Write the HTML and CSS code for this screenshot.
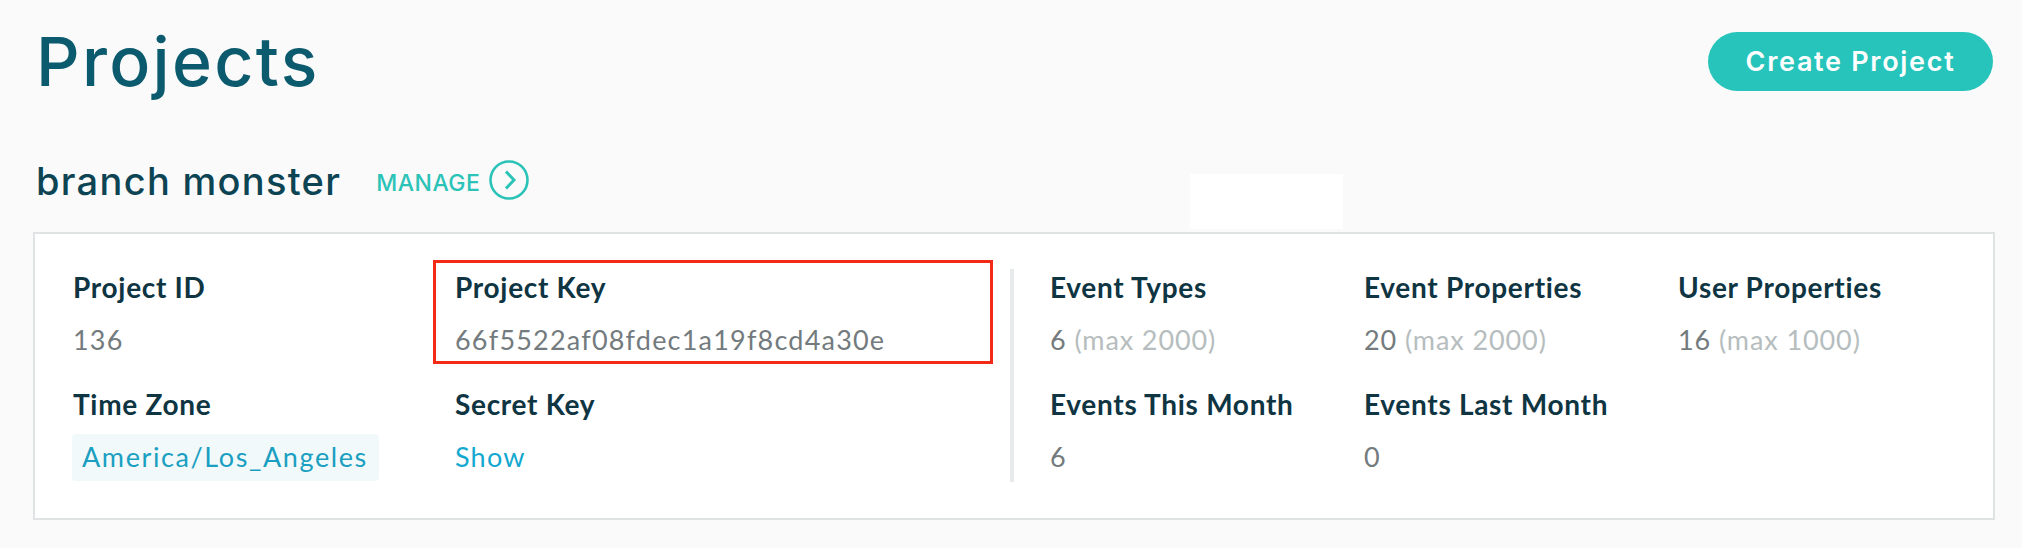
FILE: index.html
```html
<!DOCTYPE html>
<html lang="en">
<head>
<meta charset="utf-8">
<title>Projects</title>
<link rel="stylesheet" href="styles.css">
</head>
<body>
<div class="page">
  <header class="top">
    <h1 class="title">Projects</h1>
    <button class="create-btn" type="button">Create Project</button>
  </header>

  <section class="project">
    <div class="project-head">
      <h2 class="project-name">branch monster</h2>
      <a class="manage" href="#">
        <span class="manage-text">MANAGE</span>
        <svg class="manage-icon" width="40" height="40" viewBox="0 0 40 40" aria-hidden="true">
          <circle cx="20" cy="20" r="18.5" fill="none" stroke="#2bc3b8" stroke-width="2.6"/>
          <path d="M17 11.5 L25 20 L17 28.5" fill="none" stroke="#2bc3b8" stroke-width="3"/>
        </svg>
      </a>
      <div class="tab-ghost"></div>
    </div>

    <div class="card">
      <div class="card-left">
        <div class="field">
          <div class="label">Project ID</div>
          <div class="value">136</div>
        </div>
        <div class="field">
          <div class="label">Project Key</div>
          <div class="value">66f5522af08fdec1a19f8cd4a30e</div>
          <div class="highlight-box"></div>
        </div>
        <div class="field">
          <div class="label">Time Zone</div>
          <div class="value"><span class="tz">America/Los_Angeles</span></div>
        </div>
        <div class="field">
          <div class="label">Secret Key</div>
          <div class="value"><a class="link" href="#">Show</a></div>
        </div>
      </div>
      <div class="card-right">
        <div class="field">
          <div class="label">Event Types</div>
          <div class="value stat">6 <span class="muted">(max 2000)</span></div>
        </div>
        <div class="field">
          <div class="label">Event Properties</div>
          <div class="value stat">20 <span class="muted">(max 2000)</span></div>
        </div>
        <div class="field">
          <div class="label">User Properties</div>
          <div class="value stat">16 <span class="muted">(max 1000)</span></div>
        </div>
        <div class="field">
          <div class="label">Events This Month</div>
          <div class="value stat">6</div>
        </div>
        <div class="field">
          <div class="label">Events Last Month</div>
          <div class="value stat">0</div>
        </div>
      </div>
    </div>
  </section>
</div>
</body>
</html>
```

FILE: styles.css
```css
* { box-sizing: border-box; }

html, body {
  margin: 0;
  padding: 0;
  background: #fafafa;
}

body {
  font-family: "Lato", "Liberation Sans", sans-serif;
}

.page {
  padding: 27px 27px 0 33px;
}

.top {
  display: flex;
  align-items: center;
  justify-content: space-between;
}

.title {
  margin: 0 0 0 3px;
  font-family: "Inter", "Liberation Sans", sans-serif;
  font-weight: 500;
  font-size: 68px;
  line-height: 68px;
  letter-spacing: 2.3px;
  color: #0b5a6d;
}

.create-btn {
  margin-right: 2px;
  width: 285px;
  height: 59px;
  border: 0;
  border-radius: 30px;
  background: #27c4bb;
  color: #ffffff;
  font-family: "Inter", "Liberation Sans", sans-serif;
  font-weight: 600;
  font-size: 27px;
  letter-spacing: 1.7px;
  padding: 0;
}

.project {
  margin-top: 62px;
}

.project-head {
  position: relative;
  display: flex;
  align-items: center;
  height: 48px;
  margin-bottom: 27px;
  padding-left: 3px;
}

.project-name {
  margin: 0;
  font-family: "Inter", "Liberation Sans", sans-serif;
  font-weight: 500;
  font-size: 38px;
  line-height: 48px;
  letter-spacing: 1.3px;
  color: #0d4454;
}

.manage {
  display: flex;
  align-items: center;
  gap: 9px;
  margin-left: 35px;
  text-decoration: none;
}

.manage-text {
  font-family: "Inter", "Liberation Sans", sans-serif;
  font-weight: 500;
  font-size: 23px;
  letter-spacing: 0.5px;
  color: #2bc3b8;
  padding-top: 4px;
}

.manage-icon {
  display: block;
  margin-top: -2px;
}

.tab-ghost {
  position: absolute;
  left: 1157px;
  top: 17px;
  width: 153px;
  height: 55px;
  background: #ffffff;
}

.card {
  display: flex;
  background: #ffffff;
  border: 2px solid #e0e3e4;
  padding: 35px 0 36px 38px;
}

.card-left {
  display: grid;
  grid-template-columns: 382px 555px;
  row-gap: 28px;
  padding-bottom: 7px;
}

.card-right {
  display: grid;
  grid-template-columns: repeat(3, 314px);
  row-gap: 28px;
  border-left: 4px solid #e6eaeb;
  padding-left: 36px;
  padding-bottom: 7px;
}

.field {
  position: relative;
}

.label {
  font-weight: 700;
  font-size: 28px;
  line-height: 36px;
  letter-spacing: 0.7px;
  color: #0f3543;
  margin-bottom: 17px;
}

.value {
  font-weight: 400;
  font-size: 27px;
  line-height: 36px;
  color: #737b7e;
  letter-spacing: 1.2px;
}

.value.stat {
  letter-spacing: 0.9px;
}

.muted {
  color: #b6bdbe;
}

.tz {
  display: inline-block;
  margin: -5px 0 -6px -1px;
  padding: 5px 11px 6px 10px;
  border-radius: 4px;
  background: #f1f9fb;
  color: #1a9fc1;
  letter-spacing: 1.6px;
}

.link {
  color: #13a8d0;
  text-decoration: none;
}

.highlight-box {
  position: absolute;
  left: -22px;
  top: -9px;
  width: 560px;
  height: 104px;
  border: 3px solid #f22a16;
  pointer-events: none;
}
```
